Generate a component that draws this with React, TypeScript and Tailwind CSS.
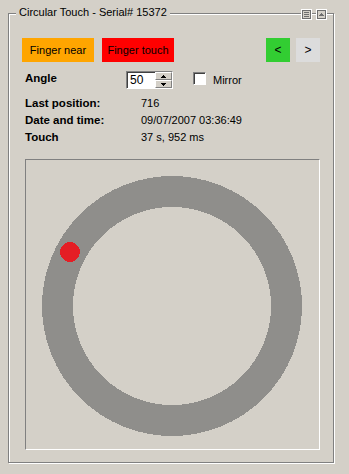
import React from "react";

const info = [
  { label: "Last position:", value: "716" },
  { label: "Date and time:", value: "09/07/2007 03:36:49" },
  { label: "Touch", value: "37 s, 952 ms" },
];

function ListIcon() {
  return (
    <svg width="11" height="11" viewBox="0 0 11 11" shapeRendering="crispEdges">
      <rect x="0.5" y="0.5" width="10" height="10" fill="#d4d0c8" stroke="#ffffff" />
      <rect x="1.5" y="1.5" width="8" height="8" fill="none" stroke="#6e6e6e" />
      <rect x="3" y="3" width="5" height="1" fill="#6e6e6e" />
      <rect x="3" y="5" width="5" height="1" fill="#6e6e6e" />
      <rect x="3" y="7" width="5" height="1" fill="#6e6e6e" />
    </svg>
  );
}

function CollapseIcon() {
  return (
    <svg width="11" height="11" viewBox="0 0 11 11" shapeRendering="crispEdges">
      <rect x="0.5" y="0.5" width="10" height="10" fill="#d4d0c8" stroke="#ffffff" />
      <rect x="1.5" y="1.5" width="8" height="8" fill="none" stroke="#6e6e6e" />
      <polygon points="5.5,4 8,7 3,7" fill="#6e6e6e" />
    </svg>
  );
}

function Spinner({ value }: { value: number }) {
  return (
    <div className="flex w-[47px] h-[18px] border border-t-[#808080] border-l-[#808080] border-b-white border-r-white shadow-[inset_1px_1px_0_#404040] bg-white">
      <div className="flex-1 pl-[3px] pt-[2px] leading-[13px] text-[12px]">{value}</div>
      <div className="flex flex-col w-[17px] h-[16px] mt-0">
        <div className="flex-1 bg-[#d4d0c8] border border-t-white border-l-white border-b-[#808080] border-r-[#808080] flex items-center justify-center">
          <svg width="5" height="3" viewBox="0 0 5 3" shapeRendering="crispEdges">
            <polygon points="2.5,0 5,3 0,3" fill="#000" />
          </svg>
        </div>
        <div className="flex-1 bg-[#d4d0c8] border border-t-white border-l-white border-b-[#808080] border-r-[#808080] flex items-center justify-center">
          <svg width="5" height="3" viewBox="0 0 5 3" shapeRendering="crispEdges">
            <polygon points="0,0 5,0 2.5,3" fill="#000" />
          </svg>
        </div>
      </div>
    </div>
  );
}

export default function App() {
  return (
    <div className="w-[349px] h-[474px] bg-[#d4d0c8] pt-[13px] pl-[8px] font-['Liberation_Sans',Arial,sans-serif] text-black text-[11px] overflow-hidden">
      <div className="relative w-[326px] h-[450px] border border-[#808080] shadow-[1px_1px_0_#fff,inset_1px_1px_0_#fff] px-[13px] pt-[24px]">
        {/* group title over the frame line */}
        <div className="absolute left-[7px] top-[-8px] px-[3px] bg-[#d4d0c8] leading-[13px] text-[11px]">
          Circular Touch - Serial# 15372
        </div>
        <div className="absolute left-[292px] top-[-5px] flex gap-[4px]">
          <ListIcon />
          <CollapseIcon />
        </div>

        <div className="flex h-[24px]">
          <div className="w-[72px] bg-[#ffa500] flex items-center justify-center">Finger near</div>
          <div className="w-[72px] ml-[8px] bg-[#ff0000] flex items-center justify-center">Finger touch</div>
          <div className="ml-auto w-[24px] bg-[#32cd32] flex items-center justify-center text-[12px]">&lt;</div>
          <div className="ml-[6px] w-[24px] bg-[#dcdcdc] flex items-center justify-center text-[12px]">&gt;</div>
        </div>

        <div className="mt-[9px] flex items-start h-[18px]">
          <div className="w-[104px] pl-[3px] pt-[1px] leading-[12px] text-[11.5px] font-bold">Angle</div>
          <Spinner value={50} />
          <div className="ml-[20px] mt-[1px] w-[13px] h-[13px] bg-white border border-t-[#808080] border-l-[#808080] border-b-white border-r-white shadow-[inset_1px_1px_0_#404040]" />
          <div className="ml-[7px] pt-[3px] leading-[13px]">Mirror</div>
        </div>

        <div className="mt-[6px] grid grid-cols-[119px_1fr]">
          {info.map((row) => (
            <React.Fragment key={row.label}>
              <div className="pl-[3px] h-[17px] leading-[17px] text-[11.5px] font-bold">{row.label}</div>
              <div className="h-[17px] leading-[16px]">{row.value}</div>
            </React.Fragment>
          ))}
        </div>

        <div className="mt-[13px] ml-[3px] w-[295px] h-[291px] border border-t-[#808080] border-l-[#808080] border-b-white border-r-white">
          <svg width="293" height="289" viewBox="0 0 293 289" shapeRendering="crispEdges">
            <circle cx="146" cy="146" r="114.5" fill="none" stroke="#8f8e8b" strokeWidth="31" />
            <circle cx="44" cy="92" r="10" fill="#e41e25" />
          </svg>
        </div>
      </div>
    </div>
  );
}
